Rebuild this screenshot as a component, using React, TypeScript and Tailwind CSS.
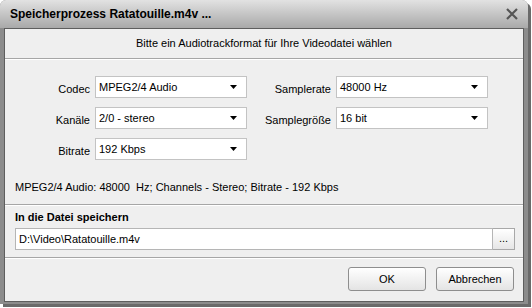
import React from "react";

const font = { fontFamily: '"Liberation Sans", Arial, sans-serif' };

function Arrow() {
  return (
    <svg width="8" height="4" viewBox="0 0 8 4" className="block">
      <path d="M0 0 H7 L3.5 4 Z" fill="#000" />
    </svg>
  );
}

function Select({ value, w }: { value: string; w: string }) {
  return (
    <div className={`${w} h-[22px] bg-white border border-[#c3c3c3] flex items-center pl-[3px] pr-[8px] justify-between`}>
      <span className="text-[11px] text-black leading-none">{value}</span>
      <Arrow />
    </div>
  );
}

function Row({ label, value, lw }: { label: string; value: string; lw: string }) {
  return (
    <div className="flex items-center h-[22px]">
      <div className={`${lw} text-right pr-[5px] text-[11px] text-black pt-[4px]`}>{label}</div>
      <Select value={value} w="w-[152px]" />
    </div>
  );
}

function Btn({ children }: { children: React.ReactNode }) {
  return (
    <div className="w-[78px] h-[24px] rounded-[3px] border border-[#8e8e8e] bg-gradient-to-b from-white to-[#e4e4e4] flex items-center justify-center text-[11px] text-black">
      {children}
    </div>
  );
}

export default function App() {
  return (
    <div className="w-[532px] h-[308px] bg-white relative" style={font}>
      <div className="w-[528px] h-[304px] rounded-t-[6px] bg-[#8c8c8c] shadow-[3px_3px_0_#6a6a6a] flex flex-col overflow-hidden">
        <div className="h-[28px] shrink-0 bg-gradient-to-b from-[#e2e2e2] to-[#a9a9a9] flex items-center justify-between pl-[10px] pr-[10px]">
          <span className="text-[12px] font-bold text-black">Speicherprozess Ratatouille.m4v ...</span>
          <svg width="12" height="12" viewBox="0 0 12 12">
            <path d="M1 1 L11 11 M11 1 L1 11" stroke="#555" strokeWidth="2.2" />
          </svg>
        </div>
        <div className="flex-1 mx-[4px] mb-[2px] border border-[#5e5e5e] bg-[#efefef] flex flex-col">
          <div className="h-[30px] shrink-0 flex items-center justify-center text-[11px] text-black border-b border-[#a6a6a6]">
            Bitte ein Audiotrackformat für Ihre Videodatei wählen
          </div>
          <div className="border-t border-white" />
          <div className="flex pt-[16px]">
            <div className="flex flex-col gap-[9px]">
              <Row label="Codec" value="MPEG2/4 Audio" lw="w-[90px]" />
              <Row label="Kanäle" value="2/0 - stereo" lw="w-[90px]" />
              <Row label="Bitrate" value="192 Kbps" lw="w-[90px]" />
            </div>
            <div className="flex flex-col gap-[9px] ml-[-10px]">
              <Row label="Samplerate" value="48000 Hz" lw="w-[99px]" />
              <Row label="Samplegröße" value="16 bit" lw="w-[99px]" />
            </div>
          </div>
          <div className="pl-[10px] mt-[20px] text-[11px] text-black h-[14px] leading-[14px]">
            MPEG2/4 Audio: 48000&nbsp; Hz; Channels - Stereo; Bitrate - 192 Kbps
          </div>
          <div className="mt-[10px] border-t border-[#a6a6a6]" />
          <div className="border-t border-white" />
          <div className="pl-[10px] mt-[4px] text-[11px] font-bold text-black h-[14px] leading-[14px]">In die Datei speichern</div>
          <div className="flex ml-[10px] mt-[4px] w-[500px] h-[22px]">
            <div className="flex-1 bg-white border border-[#b5b5b5] flex items-center pl-[3px] text-[11px] text-black">
              D:\Video\Ratatouille.m4v
            </div>
            <div className="w-[22px] border border-[#a8a8a8] border-l-0 bg-gradient-to-b from-white to-[#e6e6e6] flex items-end justify-center pb-[5px] text-[11px] leading-none">
              ...
            </div>
          </div>
          <div className="mt-[7px] border-t border-[#a6a6a6]" />
          <div className="border-t border-white" />
          <div className="flex justify-end gap-[10px] pr-[9px] mt-[8px]">
            <Btn>OK</Btn>
            <Btn>Abbrechen</Btn>
          </div>
        </div>
      </div>
    </div>
  );
}
